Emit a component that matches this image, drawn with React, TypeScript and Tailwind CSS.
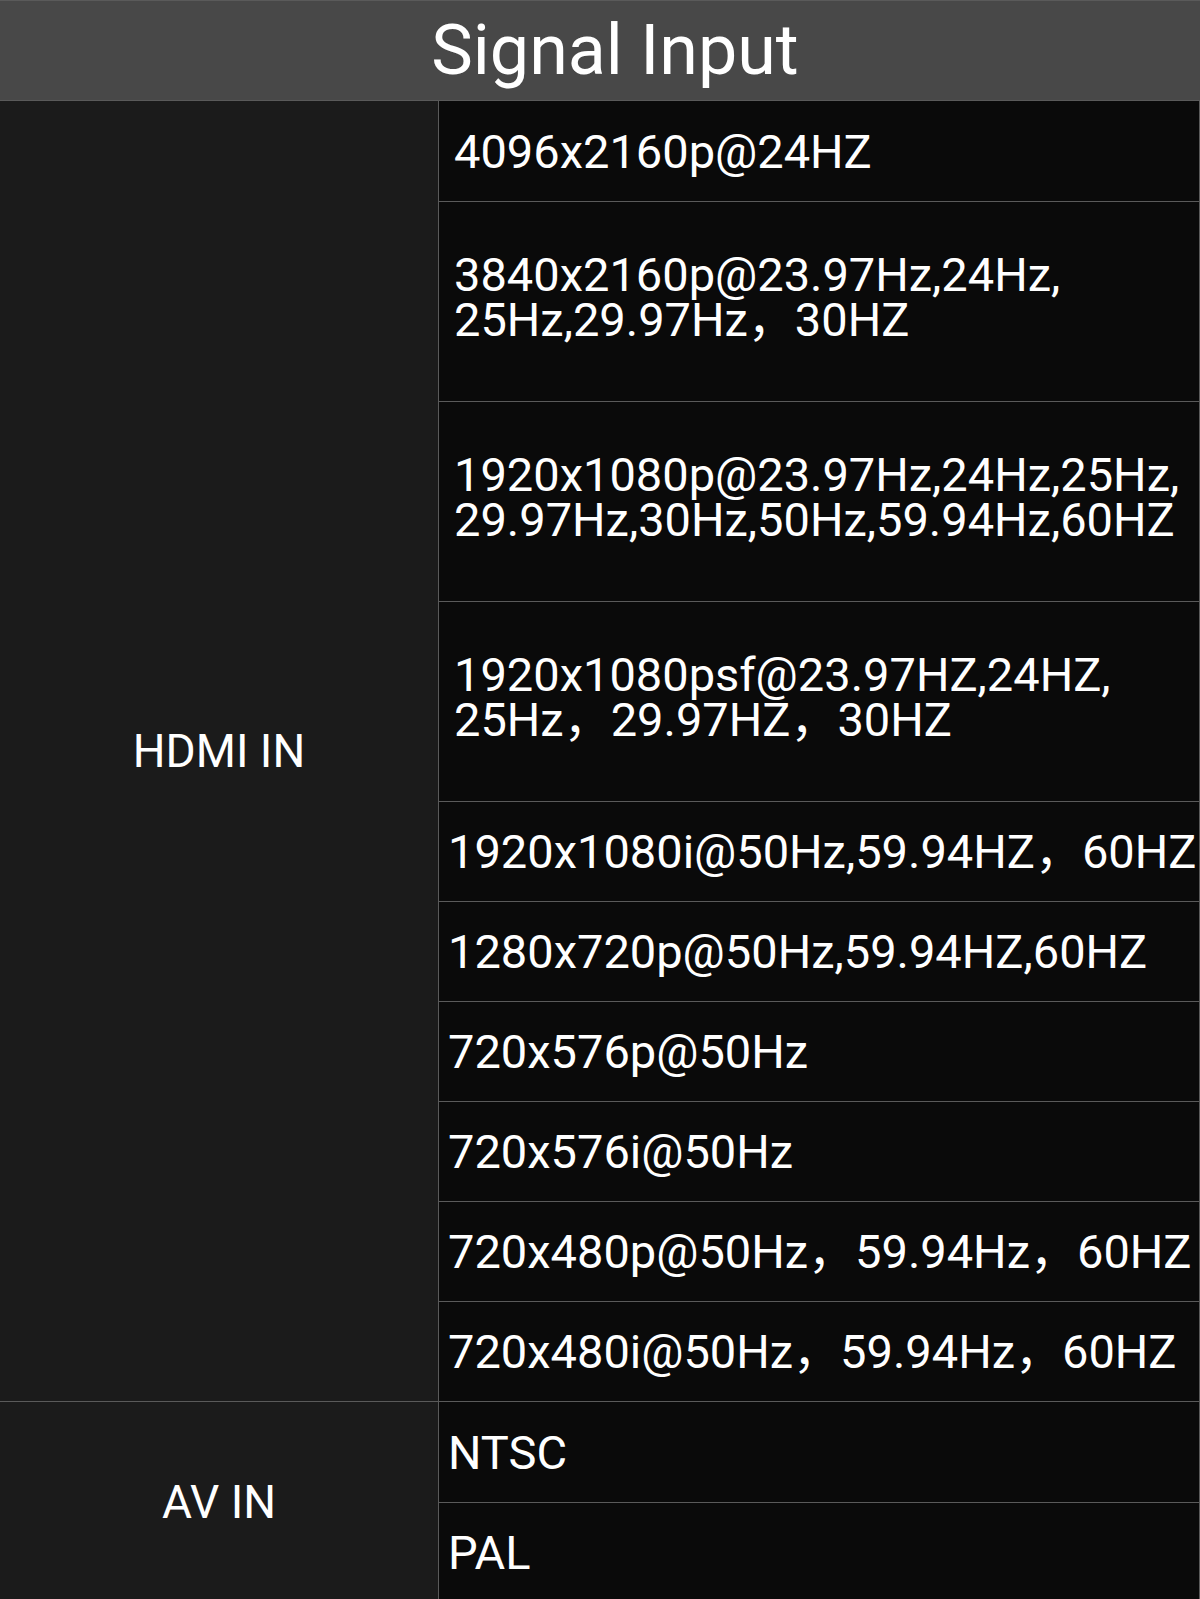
import React from "react";

type Row = { lines: string[]; span?: number; indent?: "wide" | "narrow" };

const hdmiRows: Row[] = [
  { lines: ["4096x2160p@24HZ"], indent: "wide" },
  { lines: ["3840x2160p@23.97Hz,24Hz,", "25Hz,29.97Hz，30HZ"], span: 2, indent: "wide" },
  { lines: ["1920x1080p@23.97Hz,24Hz,25Hz,", "29.97Hz,30Hz,50Hz,59.94Hz,60HZ"], span: 2, indent: "wide" },
  { lines: ["1920x1080psf@23.97HZ,24HZ,", "25Hz，29.97HZ，30HZ"], span: 2, indent: "wide" },
  { lines: ["1920x1080i@50Hz,59.94HZ，60HZ"] },
  { lines: ["1280x720p@50Hz,59.94HZ,60HZ"] },
  { lines: ["720x576p@50Hz"] },
  { lines: ["720x576i@50Hz"] },
  { lines: ["720x480p@50Hz，59.94Hz，60HZ"] },
  { lines: ["720x480i@50Hz，59.94Hz，60HZ"] },
];

const avRows: Row[] = [{ lines: ["NTSC"] }, { lines: ["PAL"] }];

const font = { fontFamily: "Roboto, 'Noto Sans CJK SC', sans-serif" };

const Cell = ({ row }: { row: Row }) => (
  <div
    className={
      "flex items-center border-t border-[#5a5a5a] bg-[#0a0a0a] " +
      (row.span === 2 ? "h-[200px] pb-[10px] " : "h-[100px] ") +
      (row.indent === "wide" ? "pl-[15px]" : "pl-[9px]")
    }
  >
    <div className="text-[47px] leading-[45px] text-white whitespace-nowrap">
      {row.lines.map((l, i) => (
        <div key={i}>{l}</div>
      ))}
    </div>
  </div>
);

const Group = ({ label, rows }: { label: string; rows: Row[] }) => (
  <div className="flex border-t border-[#5a5a5a]">
    <div className="w-[439px] shrink-0 flex items-center justify-center bg-[#1b1b1b] border-r border-[#5a5a5a] text-[46px] text-white">
      {label}
    </div>
    <div className="flex-1 flex flex-col border-r border-[#5a5a5a] [&>*:first-child]:border-t-0">
      {rows.map((r, i) => (
        <Cell key={i} row={r} />
      ))}
    </div>
  </div>
);

export default function App() {
  return (
    <div className="w-[1200px] h-[1599px] overflow-hidden bg-[#0a0a0a]" style={font}>
      <div className="h-[100px] flex items-center justify-center bg-[#484848] border-t border-[#5a5a5a] text-[70px] text-white pl-[30px]">
        Signal Input
      </div>
      <Group label="HDMI IN" rows={hdmiRows} />
      <Group label="AV IN" rows={avRows} />
    </div>
  );
}
